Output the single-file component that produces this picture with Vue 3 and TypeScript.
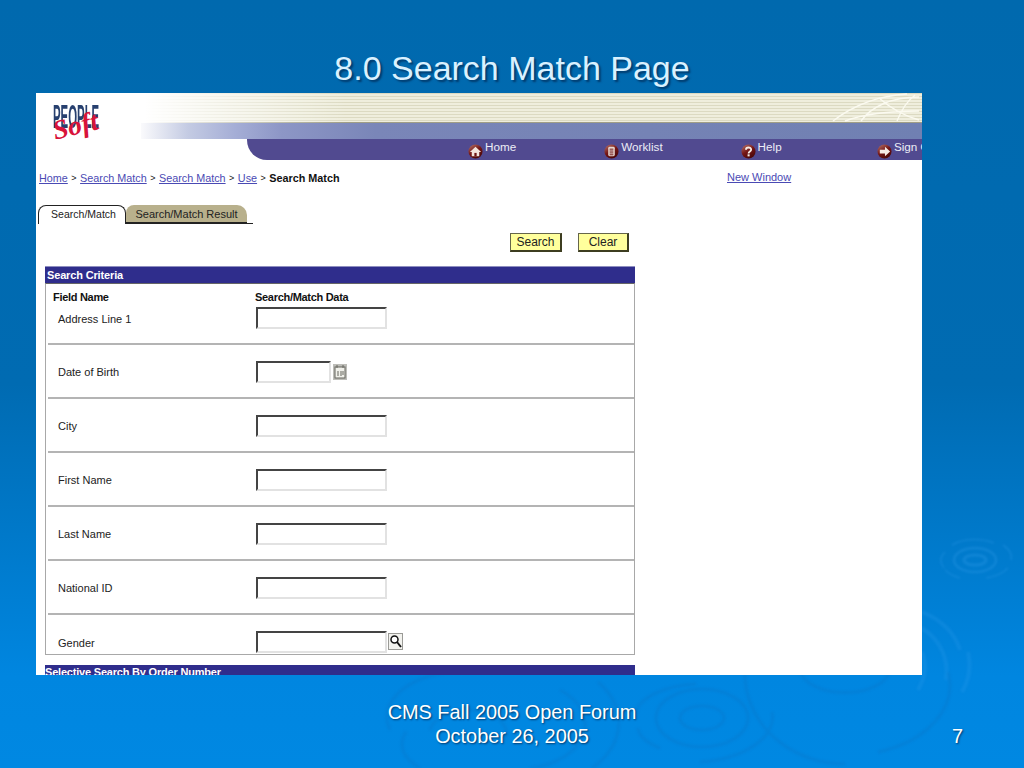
<script setup lang="ts">
const rows: { label: string; kind?: string; first?: boolean }[] = [
  { label: 'Address Line 1', first: true },
  { label: 'Date of Birth', kind: 'date' },
  { label: 'City' },
  { label: 'First Name' },
  { label: 'Last Name' },
  { label: 'National ID' },
  { label: 'Gender', kind: 'lookup' },
]
const crumbs = ['Home', 'Search Match', 'Search Match', 'Use']
</script>

<template>
  <div class="slide">
    <svg class="ripples" width="1024" height="768" viewBox="0 0 1024 768" fill="none">
      <g stroke="#35a0ec" opacity=".3">
        <ellipse cx="975" cy="560" rx="11" ry="5" stroke-width="3" />
        <ellipse cx="975" cy="560" rx="21" ry="12" stroke-width="2.500" />
        <path d="M944 568a33 18 0 0 1 1-16M952 545a32 18 0 0 1 42-2M1003 545a34 19 0 0 1 8 15M1008 568a36 20 0 0 1-22 10M960 578a36 20 0 0 1-15-8" stroke-width="1.500" />
      </g>
      <g stroke="#2c9cea" opacity=".25" stroke-width="4">
        <path d="M922 612c22 9 33 22 38 38M922 628c18 12 27 30 24 52M968 652c3 14 1 28-6 40" />
        <path d="M922 652c5 12 4 24-4 38" />
      </g>
      <g stroke="#0d71c0" opacity=".26" stroke-width="3">
        <ellipse cx="702" cy="718" rx="22" ry="12" />
        <ellipse cx="702" cy="718" rx="46" ry="29" />
        <path d="M636 712a68 32 0 0 1 60-28M772 712a84 45 0 0 1-72 50M660 748a60 28 0 0 1-22-20" />
        <path d="M745 672a100 90 0 0 0 100 92M948 672a104 70 0 0 1-70 80" />
        <path d="M800 672a46 26 0 0 0 90 0" />
        <path d="M390 730a80 46 0 0 1 60-58M598 682a98 66 0 0 1-6 86M420 768a62 34 0 0 1-14-36" />
        <path d="M560 690a66 44 0 0 1-30 78M430 730a38 24 0 0 1 76 8" />
      </g>
    </svg>

    <h1 class="title">8.0 Search Match Page</h1>

    <main class="panel">
      <header class="banner">
        <div class="logo">
          <span class="logo-people">PEOPLE</span>
          <span class="logo-soft">Soft</span>
        </div>
        <div class="stripes">
          <svg class="globe" width="90" height="29" viewBox="0 0 90 29" fill="none" stroke="#fbfaf0" stroke-width="1.400">
            <path d="M2 28C20 14 44 3 76 1M14 28C30 22 58 18 88 18M30 28C40 14 60 4 88 4M48 5C56 12 70 22 88 27M66 28C70 18 76 8 84 2" />
          </svg>
        </div>
        <div class="blue-band"></div>
        <nav class="nav">
          <a class="nav-item">
            <svg class="nav-icon" viewBox="0 0 16 16">
              <defs>
                <linearGradient id="ball" x1="0" y1="0" x2=".6" y2="1">
                  <stop offset="0" stop-color="#b9786e" />
                  <stop offset=".55" stop-color="#741616" />
                  <stop offset="1" stop-color="#4c0808" />
                </linearGradient>
              </defs>
              <circle cx="8" cy="8" r="7.500" fill="url(#ball)" />
              <path d="M8 3 14 8.500H12V13H4V8.500H2Z" fill="#f3e4dc" />
              <rect x="6.800" y="9.500" width="2.400" height="3.500" fill="#6d1414" />
            </svg>
            <span>Home</span>
          </a>
          <a class="nav-item">
            <svg class="nav-icon" viewBox="0 0 16 16">
              <circle cx="8" cy="8" r="7.500" fill="url(#ball)" />
              <rect x="4.500" y="3" width="7" height="10" rx="1.500" fill="#e7d6cf" />
              <path d="M6 5.500h4M6 7.500h4M6 9.500h4M6 11.500h4" stroke="#6d1414" />
            </svg>
            <span>Worklist</span>
          </a>
          <a class="nav-item">
            <svg class="nav-icon" viewBox="0 0 16 16">
              <circle cx="8" cy="8" r="7.500" fill="url(#ball)" />
              <path d="M5.300 6.200C5.300 3 10.800 3 10.800 6c0 2-2.700 2-2.700 4" fill="none" stroke="#f6ece6" stroke-width="2" />
              <rect x="7" y="11" width="2.200" height="2.200" fill="#f6ece6" />
            </svg>
            <span>Help</span>
          </a>
          <a class="nav-item">
            <svg class="nav-icon" viewBox="0 0 16 16">
              <circle cx="8" cy="8" r="7.500" fill="url(#ball)" />
              <path d="M8.500 3 14 8l-5.500 5v-3H3V6h5.500Z" fill="#f6ece6" />
            </svg>
            <span>Sign Out</span>
          </a>
        </nav>
      </header>

      <div class="crumb-row">
        <div class="crumbs">
          <template v-for="(c, i) in crumbs" :key="i">
            <a class="link">{{ c }}</a><span class="sep">&gt;</span>
          </template>
          <b>Search Match</b>
        </div>
        <a class="link new-window">New Window</a>
      </div>

      <div class="tabs">
        <span class="tab tab-active">Search/Match</span>
        <span class="tab tab-other">Search/Match Result</span>
        <span class="tab-tail"></span>
      </div>

      <div class="actions">
        <button class="btn">Search</button>
        <button class="btn btn-clear">Clear</button>
      </div>

      <section class="criteria">
        <h2 class="bar">Search Criteria</h2>
        <div class="box">
          <div class="head">
            <b>Field Name</b>
            <b>Search/Match Data</b>
          </div>
          <div
            v-for="r in rows"
            :key="r.label"
            class="row"
            :class="{ 'row-first': r.first, 'row-last': r.kind === 'lookup' }"
          >
            <span class="label">{{ r.label }}</span>
            <div class="field">
              <span class="input" :class="{ 'input-date': r.kind === 'date' }"></span>
              <svg v-if="r.kind === 'date'" class="cal" viewBox="0 0 14 16">
                <rect width="14" height="16" fill="#bdbdb8" />
                <rect x="2" y="3" width="10" height="11" fill="#f0f0ea" stroke="#66665f" />
                <path d="M4 1v3M10 1v3M5 7v5M8 7v5M10 7v4" stroke="#66665f" />
              </svg>
              <svg v-if="r.kind === 'lookup'" class="lookup" viewBox="0 0 15 17">
                <rect x=".5" y=".5" width="14" height="16" fill="#f2f2ee" stroke="#9a9a96" />
                <circle cx="6.500" cy="6.500" r="3.500" fill="#fff" stroke="#111" stroke-width="1.500" />
                <path d="M9 9l4 5" stroke="#111" stroke-width="2" />
              </svg>
            </div>
          </div>
        </div>
        <h2 class="bar bar-second">Selective Search By Order Number</h2>
      </section>
    </main>

    <footer class="footer">
      <div class="foot-center">CMS Fall 2005 Open Forum<br />October 26, 2005</div>
      <div class="page-no">7</div>
    </footer>
  </div>
</template>

<style>
html, body { margin: 0; background: #0069ae; }
</style>

<style scoped>
.slide {
  position: relative;
  width: 1024px;
  height: 768px;
  overflow: hidden;
  font-family: "Liberation Sans", Arial, sans-serif;
  background: linear-gradient(180deg, #0069ae 0%, #006bb2 50%, #0086e0 88%, #0088e2 100%);
  display: flex;
  flex-direction: column;
}
.ripples { position: absolute; left: 0; top: 0; filter: blur(1px); }
.title {
  position: relative;
  margin: 0;
  height: 93px;
  box-sizing: border-box;
  display: flex;
  align-items: flex-end;
  justify-content: center;
  padding-bottom: 3px;
  color: #d9f1ff;
  font-size: 34px;
  line-height: 44px;
  font-weight: 400;
  text-shadow: 2px 2px 2px #003a6c;
}
.panel {
  position: relative;
  margin-left: 36px;
  width: 886px;
  height: 582px;
  background: #fff;
  overflow: hidden;
  font-size: 11px;
  color: #222;
}
.banner { position: relative; height: 67px; }
.logo { position: absolute; left: 17px; top: 9px; width: 52px; height: 44px; z-index: 1; }
.logo-people {
  display: block;
  color: #27406f;
  font-weight: 700;
  font-size: 34px;
  line-height: 28px;
  transform: scaleX(.335);
  transform-origin: 0 0;
  white-space: nowrap;
}
.logo-soft {
  position: absolute;
  left: 0;
  top: 15px;
  color: #d8133a;
  font-family: "Liberation Serif", serif;
  font-style: italic;
  font-weight: 700;
  font-size: 27px;
  line-height: 28px;
  transform: scaleX(1.020) rotate(-14deg);
  transform-origin: 0 50%;
}
.stripes {
  position: relative;
  height: 30px;
  margin-left: 109px;
  background:
    linear-gradient(90deg, #fff 0%, rgba(255,255,255,.65) 8%, rgba(255,255,255,0) 26%),
    linear-gradient(180deg, transparent 29px, #a09e86 29px),
    repeating-linear-gradient(180deg, #dcdac2 0 1px, #efeedd 1px 3px);
}
.globe { position: absolute; right: 1px; top: 0; }
.blue-band {
  height: 16px;
  margin-left: 105px;
  background:
    linear-gradient(90deg, #fafafc 0%, #c4cbe3 6%, #a5aed6 12%, #8d96c6 18%, #7a86b8 30%, #7080b2 100%);
}
.nav {
  display: flex;
  height: 21px;
  margin-left: 211px;
  padding-left: 221px;
  background: #514a90;
  border-bottom-left-radius: 20px;
  color: #ececf6;
  white-space: nowrap;
}
.nav-item {
  flex: 0 0 136.300px;
  display: flex;
  gap: 2px;
}
.nav-item span { margin-top: 1px; line-height: 14px; font-size: 11.700px; }
.nav-icon { width: 15px; height: 15px; margin-top: 5px; }
.crumb-row {
  display: flex;
  height: 36px;
  align-items: center;
  padding-left: 3px;
  position: relative;
}
.crumbs { display: flex; align-items: center; font-size: 10.800px; color: #111; }
.sep { margin: 0 3.500px; font-size: 9px; }
.link { color: #4a4ab4; text-decoration: underline; }
.new-window { position: absolute; left: 691px; top: 11px; }
.tabs {
  display: flex;
  align-items: flex-end;
  height: 29px;
  margin-top: -1px;
  padding-left: 2px;
  box-sizing: border-box;
}
.tab {
  display: block;
  box-sizing: border-box;
  height: 19px;
  line-height: 18px;
  text-align: center;
  font-size: 11px;
}
.tab-active {
  width: 88px;
  border: 1px solid #222;
  border-bottom: 0;
  border-radius: 8px 8px 0 0;
  padding-left: 3px;
  font-size: 10.500px;
  line-height: 17px;
}
.tab-other {
  width: 121px;
  background: #b8b08c;
  border-bottom: 2px solid #222;
  border-radius: 8px 10px 0 0;
  color: #222;
}
.tab-tail { width: 6px; height: 1px; background: #222; }
.actions {
  display: flex;
  justify-content: flex-end;
  gap: 16px;
  width: 593px;
  height: 42px;
  padding-top: 9px;
  box-sizing: border-box;
}
.btn {
  width: 52px;
  height: 19px;
  padding: 0;
  box-sizing: border-box;
  background: #ffff9c;
  border: 1px solid #66664a;
  border-right: 2px solid #3d3d20;
  border-bottom: 2px solid #3d3d20;
  font: 12px/15px "Liberation Sans", Arial, sans-serif;
  color: #222;
}
.btn-clear { width: 51px; }
.criteria { margin-left: 9px; width: 590px; }
.bar {
  margin: 0;
  box-sizing: border-box;
  height: 17px;
  padding-left: 2px;
  background: #2f2d8c;
  border-top: 1px solid #8e8ec0;
  color: #fff;
  font-size: 11px;
  line-height: 16px;
  font-weight: 700;
  letter-spacing: -.15px;
}
.bar-second { margin-top: 10px; padding-left: 0; border-top: 0; line-height: 15px; letter-spacing: -.2px; }
.box {
  box-sizing: border-box;
  height: 372px;
  border: 1px solid #a8a8a8;
  border-top: 1px solid #666;
  position: relative;
}
.head {
  display: grid;
  grid-template-columns: 202px 1fr;
  padding-left: 7px;
  height: 0;
  color: #111;
  position: relative;
  top: 7px;
  line-height: 13px;
  letter-spacing: -.3px;
}
.row {
  display: grid;
  grid-template-columns: 198px 1fr;
  align-items: center;
  height: 54px;
  box-sizing: border-box;
  padding-left: 10px;
  padding-top: 2px;
  margin-left: 2px;
  border-bottom: 2px solid #b4b4b4;
  color: #222;
}
.row-first { height: 61px; padding-top: 8px; }
.row-first .label { padding-top: 2px; }
.row-last { height: 40px; border-bottom: 0; padding-top: 13px; }
.row-last .label { padding-top: 3px; }
.field { display: flex; align-items: center; gap: 2px; }
.input {
  display: block;
  box-sizing: border-box;
  width: 131px;
  height: 22px;
  background: #fff;
  border-style: solid;
  border-width: 2px;
  border-color: #444 #e2e2e2 #e2e2e2 #444;
}
.input-date { width: 75px; }
.cal { width: 14px; height: 16px; }
.row-last .field { gap: 1px; }
.lookup { width: 15px; height: 17px; margin-top: -1px; }
.footer { position: relative; flex: 1; color: #fff; text-shadow: 1px 1px 2px #00386a; }
.foot-center {
  position: absolute;
  left: 0;
  width: 1024px;
  top: 25px;
  text-align: center;
  font-size: 19.900px;
  line-height: 24px;
}
.page-no { position: absolute; left: 952px; top: 49px; font-size: 19.900px; line-height: 24px; }
</style>
